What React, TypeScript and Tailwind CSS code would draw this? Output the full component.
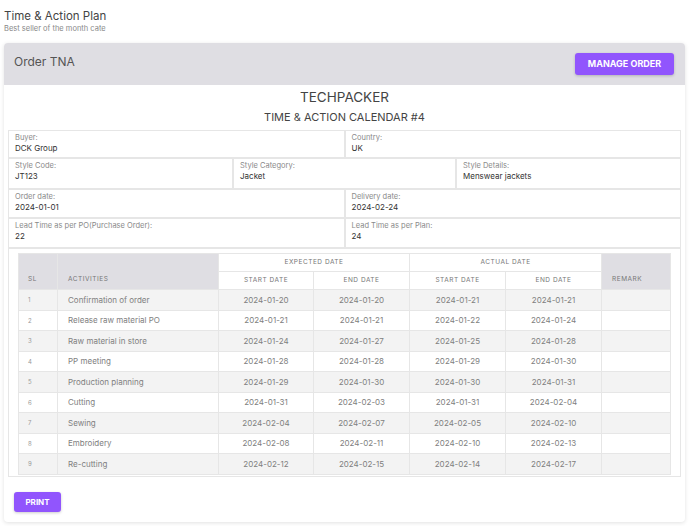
import React from "react";

const rows = [
  ["1", "Confirmation of order", "2024-01-20", "2024-01-20", "2024-01-21", "2024-01-21"],
  ["2", "Release raw material PO", "2024-01-21", "2024-01-21", "2024-01-22", "2024-01-24"],
  ["3", "Raw material in store", "2024-01-24", "2024-01-27", "2024-01-25", "2024-01-28"],
  ["4", "PP meeting", "2024-01-28", "2024-01-28", "2024-01-29", "2024-01-30"],
  ["5", "Production planning", "2024-01-29", "2024-01-30", "2024-01-30", "2024-01-31"],
  ["6", "Cutting", "2024-01-31", "2024-02-03", "2024-01-31", "2024-02-04"],
  ["7", "Sewing", "2024-02-04", "2024-02-07", "2024-02-05", "2024-02-10"],
  ["8", "Embroidery", "2024-02-08", "2024-02-11", "2024-02-10", "2024-02-13"],
  ["9", "Re-cutting", "2024-02-12", "2024-02-15", "2024-02-14", "2024-02-17"],
];

function Cell({ label, value }: { label: string; value: string }) {
  return (
    <div className="border border-[#e6e6e6] px-[6px] pt-[2px] h-full">
      <div className="text-[7.5px] leading-[10px] text-[#8a8a8a]">{label}</div>
      <div className="text-[8px] leading-[10px] text-[#333]">{value}</div>
    </div>
  );
}

const th = "border border-[#e6e6e6] text-[6.5px] font-normal tracking-[0.08em] text-[#777]";
const td = "border border-[#e6e6e6] text-[8px] text-[#808080]";

export default function App() {
  return (
    <div className="w-[689px] h-[526px] bg-white font-['Inter',sans-serif] overflow-hidden">
      <div className="px-[4px] pt-[9px]">
        <div className="text-[11.5px] leading-[15px] text-[#444]">Time &amp; Action Plan</div>
        <div className="text-[7.5px] leading-[10px] text-[#888]">Best seller of the month cate</div>
      </div>
      <div className="mx-[4px] mt-[9px] w-[681px] rounded-[4px] bg-white shadow-[0_1px_4px_rgba(0,0,0,0.12)] pb-[10px]">
        <div className="h-[42px] bg-[#dfdee3] rounded-t-[4px] flex items-center justify-between pl-[10px] pr-[11px]">
          <div className="text-[12px] text-[#555] -mt-[4px]">Order TNA</div>
          <button className="h-[22px] w-[99px] rounded-[3px] bg-[#9155fd] text-white text-[9px] font-bold shadow-[0_1px_3px_rgba(0,0,0,0.2)] -mt[1px]">
            MANAGE ORDER
          </button>
        </div>
        <div className="text-center text-[13.5px] leading-[18px] text-[#444] mt-[3px]">TECHPACKER</div>
        <div className="text-center text-[11px] leading-[14px] text-[#444] mt-[4px]">TIME &amp; ACTION CALENDAR #4</div>
        <div className="mx-[4px] mt-[6px]">
          <div className="grid grid-cols-2 h-[28px]">
            <Cell label="Buyer:" value="DCK Group" />
            <Cell label="Country:" value="UK" />
          </div>
          <div className="grid grid-cols-[225px_223px_1fr] h-[31px]">
            <Cell label="Style Code:" value="JT123" />
            <Cell label="Style Category:" value="Jacket" />
            <Cell label="Style Details:" value="Menswear jackets" />
          </div>
          <div className="grid grid-cols-2 h-[29px]">
            <Cell label="Order date:" value="2024-01-01" />
            <Cell label="Delivery date:" value="2024-02-24" />
          </div>
          <div className="grid grid-cols-2 h-[30px]">
            <Cell label="Lead Time as per PO(Purchase Order):" value="22" />
            <Cell label="Lead Time as per Plan:" value="24" />
          </div>
          <div className="border border-[#e6e6e6] pl-[9px] pr-[9px] pt-[4px] pb-[1px]">
            <table className="border-collapse w-[653px] table-fixed">
              <colgroup>
                <col className="w-[39px]" />
                <col className="w-[161px]" />
                <col className="w-[95px]" />
                <col className="w-[96px]" />
                <col className="w-[96px]" />
                <col className="w-[96px]" />
                <col />
              </colgroup>
              <thead>
                <tr className="h-[18px]">
                  <th rowSpan={2} className={th + " bg-[#dfdee3] text-left align-bottom pl-[9px] pb-[4px]"}>SL</th>
                  <th rowSpan={2} className={th + " bg-[#dfdee3] text-left align-bottom pl-[10px] pb-[4px]"}>ACTIVITIES</th>
                  <th colSpan={2} className={th + " text-center"}>EXPECTED DATE</th>
                  <th colSpan={2} className={th + " text-center"}>ACTUAL DATE</th>
                  <th rowSpan={2} className={th + " bg-[#dfdee3] text-left align-bottom pl-[10px] pb-[4px]"}>REMARK</th>
                </tr>
                <tr className="h-[18px]">
                  <th className={th + " text-center"}>START DATE</th>
                  <th className={th + " text-center"}>END DATE</th>
                  <th className={th + " text-center"}>START DATE</th>
                  <th className={th + " text-center"}>END DATE</th>
                </tr>
              </thead>
              <tbody>
                {rows.map((r, i) => (
                  <tr key={r[0]} className={"h-[20.5px] " + (i % 2 === 0 ? "bg-[#f3f3f3]" : "bg-white")}>
                    <td className="border border-[#e6e6e6] pl-[9px] text-[6px] text-[#999]">{r[0]}</td>
                    <td className={td + " pl-[10px]"}>{r[1]}</td>
                    <td className={td + " text-center"}>{r[2]}</td>
                    <td className={td + " text-center"}>{r[3]}</td>
                    <td className={td + " text-center"}>{r[4]}</td>
                    <td className={td + " text-center"}>{r[5]}</td>
                    <td className="border border-[#e6e6e6]"></td>
                  </tr>
                ))}
              </tbody>
            </table>
          </div>
        </div>
        <div className="flex px-[10px] mt-[15px]">
          <button className="h-[20px] w-[47px] rounded-[3px] bg-[#9155fd] text-white text-[8px] font-bold shadow-[0_1px_3px_rgba(0,0,0,0.2)]">
            PRINT
          </button>
        </div>
      </div>
    </div>
  );
}
